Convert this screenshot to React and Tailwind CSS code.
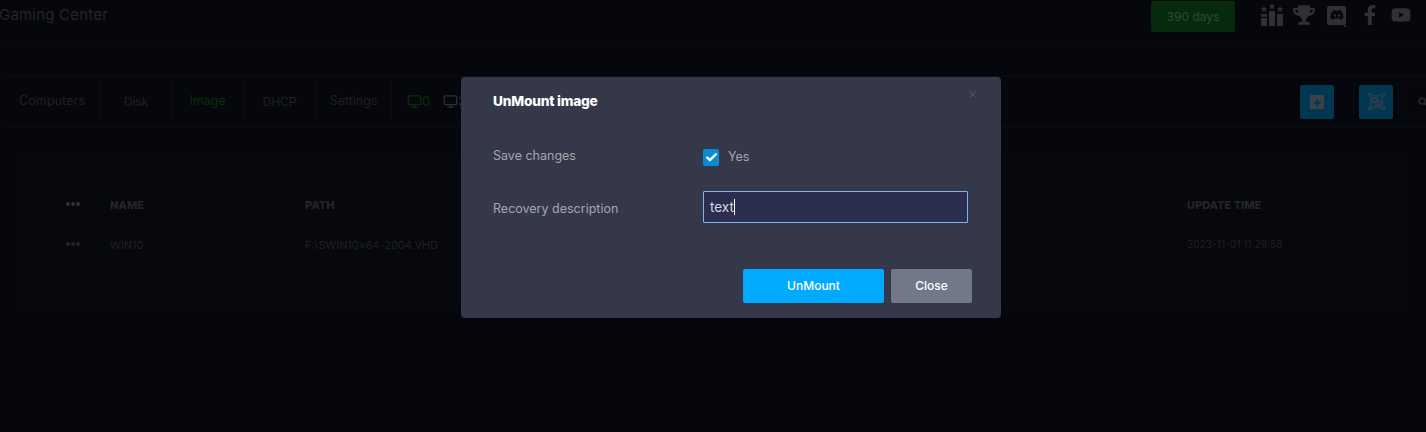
import React from 'react';
import { Monitor, Search, X, Check } from 'lucide-react';
import { FaDiscord, FaFacebookF, FaYoutube, FaTrophy } from 'react-icons/fa';

const font = { fontFamily: 'Inter, "Liberation Sans", sans-serif' };

const tabs = [
  { label: 'Computers', width: 'w-[93px]', pad: 'pl-[12px] tracking-[0.1px]' },
  { label: 'Disk', width: 'w-[72px]', pad: 'justify-center pl-[1px] text-[12px]' },
  { label: 'Image', width: 'w-[72px]', pad: 'justify-center', active: true },
  { label: 'DHCP', width: 'w-[72px]', pad: 'justify-center text-[12px]' },
  { label: 'Settings', width: 'w-[76px]', pad: 'justify-center' },
];

const GiftStars = () => (
  <svg viewBox="0 0 24 24" className="w-[24px] h-[24px]" fill="#2f3034">
    <path d="M12 0l1 2.2 2.3.3-1.7 1.6.4 2.3-2-1.1-2 1.1.4-2.3-1.7-1.6 2.3-.3zM4 3l.9 2 2.2.3-1.6 1.5.4 2.2L4 8l-1.9 1 .4-2.2L.9 5.3 3.1 5zM20 3l.9 2 2.2.3-1.6 1.5.4 2.2L20 8l-1.9 1 .4-2.2-1.6-1.5 2.2-.3z" />
    <path d="M1 11h6v3H1zM1 15h6v8H1zM9 8h6v15H9zM17 11h6v12h-6z" />
  </svg>
);

const ImageScan = () => (
  <svg viewBox="0 0 24 24" className="w-[17px] h-[17px]" fill="none" stroke="#3a4147" strokeWidth="1.6">
    <rect x="4" y="4" width="16" height="16" />
    <path d="M1 5V1h4M19 1h4v4M23 19v4h-4M5 23H1v-4" />
    <rect x="7" y="7" width="6" height="6" />
    <rect x="11" y="11" width="6" height="6" />
  </svg>
);

const Header = () => (
  <header className="h-[45px] border-b border-[#0a0b10] flex items-start justify-between overflow-hidden">
    <div className="-ml-[1px] mt-[5px] text-[15px] leading-[20px] tracking-[0.2px] text-[#242528]">Gaming Center</div>
    <div className="flex items-start mt-[1px]">
      <div className="w-[84px] h-[31px] rounded-[2px] bg-[#062a0b] text-[#2f4a33] text-[12px] flex items-center justify-center">390 days</div>
      <div className="ml-[25px] flex items-center w-[166px] h-[30px] -mt-[1px]">
        <GiftStars />
        <FaTrophy className="ml-[9px] w-[22px] h-[22px] text-[#2f3034]" />
        <div className="relative ml-[12px] w-[19px] h-[19px] bg-[#2f3034] rounded-[2px] flex items-center justify-center">
          <FaDiscord className="w-[14px] h-[14px] text-[#07080d]" />
          <span className="absolute right-0 -bottom-[3px] w-0 h-0 border-t-[3px] border-l-[3px] border-t-[#2f3034] border-l-transparent" />
        </div>
        <FaFacebookF className="ml-[14px] w-[20px] h-[20px] text-[#2f3034]" />
        <FaYoutube className="ml-[11px] w-[20px] h-[20px] text-[#2f3034]" />
      </div>
    </div>
  </header>
);

const Toolbar = () => (
  <div className="mt-[31px] ml-[7px] h-[51px] border-y border-[#0e0f14] flex items-center">
    {tabs.map((tab) => (
      <div key={tab.label} className={`${tab.width} ${tab.pad} h-[40px] flex items-center border-r border-[#0c0d12] text-[12.5px] ${tab.active ? 'text-[#083009]' : 'text-[#1f2023]'}`}>
        {tab.label}
      </div>
    ))}
    <div className="ml-[15px] flex items-center text-[13px] text-[#083009]">
      <Monitor className="w-[15px] h-[15px]" />0
    </div>
    <div className="ml-[13px] flex items-center text-[13px] text-[#2f3034]">
      <Monitor className="w-[15px] h-[15px]" />3
    </div>
    <div className="ml-auto flex items-center">
      <div className="w-[34px] h-[34px] rounded-[2px] bg-[#013750] flex items-center justify-center">
        <div className="w-[14px] h-[14px] bg-[#3a4147] text-[#013750] text-[14px] leading-[13px] text-center font-bold">+</div>
      </div>
      <div className="ml-[25px] w-[34px] h-[34px] rounded-[2px] bg-[#013750] flex items-center justify-center">
        <ImageScan />
      </div>
      <div className="ml-[12px] w-[21px] h-[34px] border-l border-y border-[#0a0b10] rounded-l-[2px] flex items-center pl-[12px]">
        <Search className="w-[9px] h-[9px] shrink-0 text-[#2f3034]" strokeWidth={3} />
      </div>
    </div>
  </div>
);

const Dots = ({ color }) => (
  <div className="w-[44px] flex gap-[1px] -mt-[3px]">
    {[0, 1, 2].map((i) => (
      <span key={i} className={`w-[4px] h-[4px] rounded-full ${color}`} />
    ))}
  </div>
);

const Table = () => (
  <div className="mt-[28px] mx-[20px] h-[150px] bg-[#07080d] pl-[46px] pt-[42px]">
    <div className="h-[16px] flex items-center text-[11px] font-extrabold text-[#242528]">
      <Dots color="bg-[#2f3034]" />
      <div className="w-[195px]">NAME</div>
      <div className="w-[882px]">PATH</div>
      <div>UPDATE TIME</div>
    </div>
    <div className="mt-[24px] h-[16px] flex items-center text-[11px] text-[#1f2024]">
      <Dots color="bg-[#232428]" />
      <div className="w-[195px]">WIN10</div>
      <div className="w-[882px] text-[10.9px]">F:\SWIN10x64-2004.VHD</div>
      <div className="text-[10.2px]">2023-11-01 11:29:58</div>
    </div>
  </div>
);

const Modal = () => (
  <div className="absolute left-[461px] top-[77px] w-[540px] h-[241px] rounded-[4px] bg-[#343849] px-[32px] pt-[16px]">
    <X className="absolute right-[23px] top-[12px] w-[11px] h-[11px] text-[#5b5f6c]" />
    <h2 className="text-[13.7px] leading-[16px] font-extrabold tracking-[-0.2px] text-white">UnMount image</h2>
    <div className="mt-[38px] h-[20px] flex items-center">
      <div className="w-[210px] text-[12.5px] text-[#a4a6ae] -mt-[2px]">Save changes</div>
      <div className="w-[16px] h-[17px] rounded-[2px] bg-[#0a8ad4] flex items-center justify-center">
        <Check className="w-[13px] h-[13px] text-white" strokeWidth={4.5} />
      </div>
      <span className="ml-[9px] text-[12.5px] text-[#a4a6ae]">Yes</span>
    </div>
    <div className="mt-[24px] h-[32px] flex items-center">
      <div className="w-[210px] pt-[4px] text-[12.5px] text-[#a4a6ae]">Recovery description</div>
      <div className="w-[265px] h-[32px] border border-[#7fb3f0] rounded-[1px] bg-[#2c2e50] pl-[6px] flex items-center text-[13.5px] text-[#d6d7dc]">
        text<span className="w-px h-[16px] bg-white" />
      </div>
    </div>
    <div className="mt-[46px] flex justify-end gap-[7px] -mr-[3px]">
      <button className="w-[141px] h-[34px] rounded-[2px] bg-[#00aaff] text-white text-[12px] font-medium">UnMount</button>
      <button className="w-[81px] h-[34px] rounded-[2px] bg-[#717888] text-white text-[12px] font-medium">Close</button>
    </div>
  </div>
);

const App = () => (
  <div className="relative w-[1426px] h-[432px] overflow-hidden bg-[#06070c]" style={font}>
    <Header />
    <Toolbar />
    <Table />
    <Modal />
  </div>
);

export default App;
